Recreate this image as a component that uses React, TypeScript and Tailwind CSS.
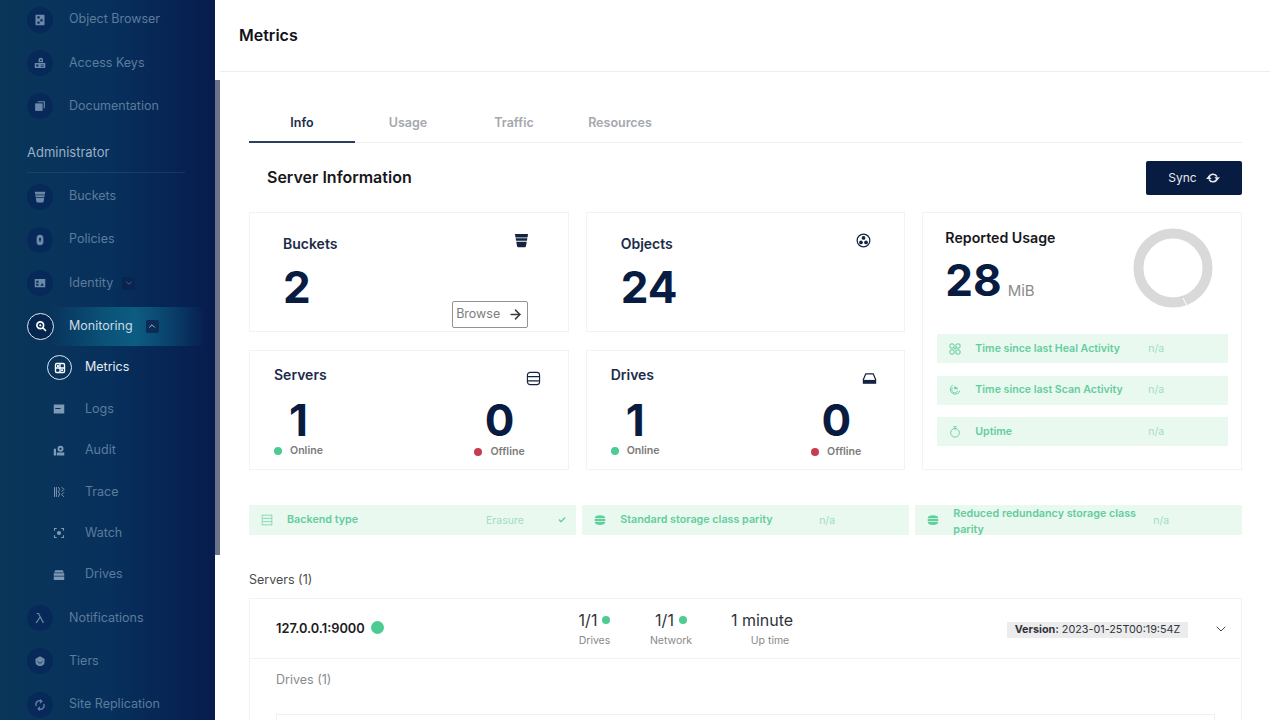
import React from "react";
import { ArrowRight, ChevronDown, ChevronUp, Check } from "lucide-react";

type IconProps = { className?: string };

const BucketIcon = ({ className }: IconProps) => (
  <svg viewBox="0 0 16 16" className={className} fill="currentColor">
    <path d="M1 1h14l-.6 3.800H1.600z" />
    <path d="M1.800 5.700h12.400l-.4 2.600H2.200z" />
    <path d="M2.400 9.200h11.200l-.9 5a1.200 1.200 0 0 1-1.200 1H4.500a1.200 1.200 0 0 1-1.200-1z" />
  </svg>
);
const BrowserIcon = ({ className }: IconProps) => (
  <svg viewBox="0 0 16 16" className={className} fill="currentColor">
    <path fillRule="evenodd" d="M3 1h10a1 1 0 0 1 1 1v12a1 1 0 0 1-1 1H3a1 1 0 0 1-1-1V2a1 1 0 0 1 1-1zm1.500 2v3h3V3zm4 4v3h3V7zm-4 3v3h3v-3z" />
  </svg>
);
const KeysIcon = ({ className }: IconProps) => (
  <svg viewBox="0 0 16 16" className={className} fill="currentColor">
    <path fillRule="evenodd" d="M9 1a3 3 0 0 1 3 3v3H6V4a3 3 0 0 1 3-3zm0 2a1.200 1.200 0 1 0 0 2.400A1.200 1.200 0 0 0 9 3z" />
    <path fillRule="evenodd" d="M1 8h14v6.500H1zm2 2v2.500h3V10zm6 0v1h4v-1zm0 2v1h4v-1z" />
  </svg>
);
const DocsIcon = ({ className }: IconProps) => (
  <svg viewBox="0 0 16 16" className={className} fill="currentColor">
    <path d="M5 1.500h9.500V11H13V3H5z" />
    <path d="M1.500 4.500H11.500V14.500H1.500z" />
  </svg>
);
const PolicyIcon = ({ className }: IconProps) => (
  <svg viewBox="0 0 16 16" className={className} fill="currentColor">
    <path fillRule="evenodd" d="M8 1c3 0 4.500 2 4.500 5v5c0 2.500-2 4-4.500 4s-4.500-1.500-4.500-4V6C3.500 3 5 1 8 1zm0 4a1.500 1.500 0 0 0-1 2.600V10h2V7.600A1.500 1.500 0 0 0 8 5z" />
  </svg>
);
const IdentityIcon = ({ className }: IconProps) => (
  <svg viewBox="0 0 16 16" className={className} fill="currentColor">
    <path fillRule="evenodd" d="M1 2.500h14v11H1zM3 5v2.500h3V5zm0 4v2.500h3V9zm5.500 2.500H13L11 8z" />
  </svg>
);
const MonitorIcon = ({ className }: IconProps) => (
  <svg viewBox="0 0 16 16" className={className} fill="none" stroke="currentColor" strokeWidth="2.200">
    <circle cx="7" cy="7" r="4.500" />
    <circle cx="7" cy="7" r="1" fill="currentColor" strokeWidth="1" />
    <path d="M10.500 10.500 14 14" strokeLinecap="round" />
  </svg>
);
const MetricsIcon = ({ className }: IconProps) => (
  <svg viewBox="0 0 16 16" className={className} fill="none" stroke="currentColor" strokeWidth="1.800">
    <rect x="2" y="2" width="12" height="12" rx="1.500" />
    <path d="M8 2v12M2 8h12" />
    <path d="M4 4h2.500v2.500H4zM9.500 9.500H12V12H9.500z" fill="currentColor" stroke="none" />
  </svg>
);
const LogsIcon = ({ className }: IconProps) => (
  <svg viewBox="0 0 16 16" className={className} fill="currentColor">
    <path fillRule="evenodd" d="M1 2h14v12H1zM3 6.500V8h7V6.500z" />
  </svg>
);
const AuditIcon = ({ className }: IconProps) => (
  <svg viewBox="0 0 16 16" className={className} fill="currentColor">
    <path fillRule="evenodd" d="M10 1a4 4 0 1 1 0 8 4 4 0 0 1 0-8zm0 2.500a1.500 1.500 0 1 0 0 3 1.500 1.500 0 0 0 0-3z" />
    <path d="M1 5h3v9H1zM5 10h10v4H5z" />
  </svg>
);
const TraceIcon = ({ className }: IconProps) => (
  <svg viewBox="0 0 16 16" className={className} fill="none" stroke="currentColor" strokeWidth="1.300">
    <path d="M2 1.500v13M4.500 1.500v13M11.500 1.500l3 3-3 3M14.500 8.500l-3 3 3 3M7 1.500l2 3-2 3 2 3-2 4" />
  </svg>
);
const WatchIcon = ({ className }: IconProps) => (
  <svg viewBox="0 0 16 16" className={className} fill="none" stroke="currentColor" strokeWidth="1.500">
    <path d="M5 2H2v3M11 2h3v3M5 14H2v-3M11 14h3v-3" />
    <circle cx="8" cy="8" r="2.800" fill="currentColor" stroke="none" />
  </svg>
);
const DrivesIcon = ({ className }: IconProps) => (
  <svg viewBox="0 0 16 16" className={className} fill="currentColor">
    <path d="M3 1.500h10l1.500 3H1.500zM1 5.500h14V9H1zM1 10h14v3.500a1 1 0 0 1-1 1H2a1 1 0 0 1-1-1z" />
  </svg>
);
const LambdaIcon = ({ className }: IconProps) => (
  <svg viewBox="0 0 16 16" className={className} fill="none" stroke="currentColor" strokeWidth="1.600">
    <path d="M3.500 2H6l6.500 12.500M8 7l-5 7.500" />
  </svg>
);
const TiersIcon = ({ className }: IconProps) => (
  <svg viewBox="0 0 16 16" className={className} fill="currentColor">
    <path d="M8 1.500 14 5v4.500c0 2.800-2.500 5-6 5s-6-2.200-6-5V5z" />
    <path d="M4.500 8.500l2 2h3l2-2" fill="none" stroke="#06264f" strokeWidth="1" />
  </svg>
);
const ReplicationIcon = ({ className }: IconProps) => (
  <svg viewBox="0 0 16 16" className={className} fill="none" stroke="currentColor" strokeWidth="1.500">
    <path d="M3 9.500A5 5 0 0 1 10 3M13 6.500A5 5 0 0 1 6 13" />
    <path d="M8 1l2.500 2L8 5.500M8 10.500 5.500 13 8 15" />
  </svg>
);
const ObjectsIcon = ({ className }: IconProps) => (
  <svg viewBox="0 0 16 16" className={className}>
    <circle cx="8" cy="8" r="6.800" fill="none" stroke="currentColor" strokeWidth="1.300" />
    <circle cx="8" cy="5.300" r="2" fill="currentColor" />
    <circle cx="5.300" cy="10" r="2" fill="currentColor" />
    <circle cx="10.700" cy="10" r="2" fill="currentColor" />
  </svg>
);
const ServerIcon = ({ className }: IconProps) => (
  <svg viewBox="0 0 16 16" className={className} fill="none" stroke="currentColor" strokeWidth="1.200">
    <rect x="1.500" y="1.500" width="13" height="13" rx="3" />
    <path d="M1.500 6h13M1.500 10.500h13" />
  </svg>
);
const DriveIcon = ({ className }: IconProps) => (
  <svg viewBox="0 0 16 16" className={className} fill="none" stroke="currentColor" strokeWidth="1.300">
    <path d="M4 3h8l2.500 6v4h-13V9z" />
    <path d="M1.500 9.500h13V13h-13z" fill="currentColor" stroke="none" />
  </svg>
);
const HealIcon = ({ className }: IconProps) => (
  <svg viewBox="0 0 16 16" className={className} fill="none" stroke="currentColor" strokeWidth="1.400">
    <circle cx="4" cy="4" r="2.900" />
    <circle cx="12" cy="4" r="2.900" />
    <circle cx="4" cy="12" r="2.900" />
    <circle cx="12" cy="12" r="2.900" />
    <path d="M6 6l4 4M10 6l-4 4" />
  </svg>
);
const ScanIcon = ({ className }: IconProps) => (
  <svg viewBox="0 0 16 16" className={className} fill="none" stroke="currentColor" strokeWidth="1.300">
    <path d="M5 1.500A6.500 6.500 0 1 0 14.500 9" />
    <path d="M5.500 4.500A4 4 0 1 0 11.500 9" />
    <path d="M7 7V3l2 .5A4 4 0 0 1 12 7z" fill="currentColor" stroke="none" />
  </svg>
);
const UptimeIcon = ({ className }: IconProps) => (
  <svg viewBox="0 0 16 16" className={className} fill="none" stroke="currentColor" strokeWidth="1.300">
    <circle cx="8" cy="9" r="5.800" />
    <path d="M8 .8v4.500M6 .8h4" />
  </svg>
);
const BackendIcon = ({ className }: IconProps) => (
  <svg viewBox="0 0 16 16" className={className} fill="none" stroke="currentColor" strokeWidth="1.100">
    <rect x="1.500" y="1.500" width="13" height="13" />
    <path d="M1.500 5.800h13M1.500 10.200h13" />
  </svg>
);
const StorageIcon = ({ className }: IconProps) => (
  <svg viewBox="0 0 16 16" className={className} fill="currentColor">
    <path d="M1 5.200C1 2.500 4 1.500 8 1.500s7 1 7 3.700zM1 6.300h14v3.400H1zM1 10.800h14c0 2.700-3 3.700-7 3.700s-7-1-7-3.700z" />
  </svg>
);
const SyncIcon = ({ className }: IconProps) => (
  <svg viewBox="0 0 16 16" className={className}>
    <path d="M3.200 7.500A5 5 0 0 1 12.500 6.500M12.800 8.500A5 5 0 0 1 3.500 9.500" fill="none" stroke="currentColor" strokeWidth="1.800" />
    <path d="M9.500 7h6.500l-3.200 3.500zM0 9h6.500L3.200 5.500z" fill="currentColor" />
  </svg>
);

const NavItem = ({ icon: Icon, label, chevron }: { icon: React.FC<IconProps>; label: string; chevron?: boolean }) => (
  <div className="flex h-[43.3px] items-center pl-[27px]">
    <div className="flex h-[26px] w-[26px] items-center justify-center rounded-full bg-[#07295a]">
      <Icon className="h-[12px] w-[12px] text-[#6d89a8]" />
    </div>
    <span className="ml-[16px] text-[12.5px] text-[#5c7c9c]">{label}</span>
    {chevron && (
      <span className="ml-[9px] flex h-[13px] w-[13px] items-center justify-center rounded-[2px] bg-[#08244f]">
        <ChevronDown className="h-[10px] w-[10px] text-[#4f7292]" />
      </span>
    )}
  </div>
);

const SubItem = ({ icon: Icon, label }: { icon: React.FC<IconProps>; label: string }) => (
  <div className="flex h-[41.4px] items-center pl-[53px]">
    <Icon className="h-[12px] w-[12px] text-[#7f9ab6]" />
    <span className="ml-[20px] text-[12.5px] text-[#5c7c9c]">{label}</span>
  </div>
);

const Sidebar = () => (
  <aside className="relative h-[720px] w-[220px] shrink-0 overflow-hidden bg-[linear-gradient(90deg,#0a3659_0%,#07305c_50%,#071f50_90%,#071b4c_100%)]">
    <div className="-mt-[2px] w-[215px]">
      <NavItem icon={BrowserIcon} label="Object Browser" />
      <NavItem icon={KeysIcon} label="Access Keys" />
      <NavItem icon={DocsIcon} label="Documentation" />
      <div className="mx-[27px] mb-[2px] h-[45px] w-[158px] border-b border-[#ffffff14] pt-[14px] text-[13px] leading-[20px] text-[#9ab0c5]">
        Administrator
      </div>
      <NavItem icon={BucketIcon} label="Buckets" />
      <NavItem icon={PolicyIcon} label="Policies" />
      <NavItem icon={IdentityIcon} label="Identity" chevron />
      <div className="flex h-[43.3px] items-center pl-[27px] pr-[10px]">
        <div className="z-10 flex h-[27px] w-[27px] shrink-0 items-center justify-center rounded-full border border-[#dfe8ef] bg-[#07264f]">
          <MonitorIcon className="h-[12px] w-[12px] text-white" />
        </div>
        <div className="-ml-[4px] flex h-[39px] flex-1 items-center bg-[linear-gradient(90deg,#07305c00_0%,#0b5278_35%,#0c5c82_55%,#07305c00_100%)] pl-[19px]">
          <span className="text-[12.5px] text-[#c9dbe6]">Monitoring</span>
          <span className="ml-[13px] flex h-[13px] w-[13px] items-center justify-center rounded-[2px] bg-[#0a2c57]">
            <ChevronUp className="h-[10px] w-[10px] text-[#c8d6e2]" />
          </span>
        </div>
      </div>
      <div className="-mt-[1px] mb-[1px]">
        <div className="flex h-[41.4px] items-center pl-[47px]">
          <div className="flex h-[25px] w-[25px] items-center justify-center rounded-full border border-[#dfe8ef]">
            <MetricsIcon className="h-[12px] w-[12px] text-white" />
          </div>
          <span className="ml-[13px] text-[12.5px] text-[#e4edf3]">Metrics</span>
        </div>
        <SubItem icon={LogsIcon} label="Logs" />
        <SubItem icon={AuditIcon} label="Audit" />
        <SubItem icon={TraceIcon} label="Trace" />
        <SubItem icon={WatchIcon} label="Watch" />
        <SubItem icon={DrivesIcon} label="Drives" />
      </div>
      <NavItem icon={LambdaIcon} label="Notifications" />
      <NavItem icon={TiersIcon} label="Tiers" />
      <NavItem icon={ReplicationIcon} label="Site Replication" />
    </div>
    {/* scrollbar */}
    <div className="absolute bottom-0 right-0 top-0 w-[5px] bg-white">
      <div className="mt-[80px] h-[475px] bg-[#6c7488]" />
    </div>
  </aside>
);

const Dot = ({ className }: IconProps) => <span className={`inline-block rounded-full ${className}`} />;

const Status = ({ value, label, dotColor, labelClass }: { value: number; label: string; dotColor: string; labelClass?: string }) => (
  <div className="flex flex-col items-center">
    <span className="text-[44px] font-bold leading-[44px] text-[#081c42]">{value}</span>
    <span className={`mt-[2px] flex items-center gap-[8px] text-[10.6px] font-semibold leading-[14px] text-[#7b7b7b] ${labelClass ?? ""}`}>
      <Dot className={`h-[8px] w-[8px] ${dotColor}`} />
      {label}
    </span>
  </div>
);

const CountCard = ({ title, icon: Icon }: { title: string; icon: React.FC<IconProps> }) => (
  <div className="flex h-[120px] flex-col border border-[#f3f3f3] pl-[24px] pr-[27px] pt-[14px]">
    <div className="flex items-start justify-between">
      <span className="text-[14px] font-semibold leading-[20px] text-[#1c2b4a]">{title}</span>
      <Icon className="mt-[6px] h-[15px] w-[15px] text-[#14233f]" />
    </div>
    <div className="mt-[12px] flex items-start justify-between pr-[16px]">
      <Status value={1} label="Online" dotColor="bg-[#4ccb92]" />
      <Status value={0} label="Offline" dotColor="bg-[#c83b51]" labelClass="translate-y-[1px]" />
    </div>
  </div>
);

const UsageRow = ({ icon: Icon, label }: { icon: React.FC<IconProps>; label: string }) => (
  <div className="flex h-[29px] items-center bg-[#eaf9f0] pl-[12px]">
    <Icon className="h-[12px] w-[12px] text-[#6fd0a4]" />
    <span className="ml-[14px] w-[173px] text-[10.6px] font-semibold text-[#63cd9d]">{label}</span>
    <span className="text-[10.5px] text-[#9fdcc0]">n/a</span>
  </div>
);

const StatsGrid = () => (
  <div className="mt-[17px] grid grid-cols-3 grid-rows-[120px_120px] gap-x-[17px] gap-y-[18px]">
    <div className="flex border border-[#f3f3f3] pl-[33px] pr-[40px] pt-[21px]">
      <div className="flex-1">
        <div className="text-[14px] font-semibold leading-[20px] text-[#1c2b4a]">Buckets</div>
        <div className="mt-[11px] text-[44px] font-bold leading-[44px] text-[#081c42]">2</div>
      </div>
      <div className="flex flex-col items-end justify-between pb-[3px]">
        <BucketIcon className="-mt-[1px] mr-[-1px] h-[15px] w-[15px] text-[#14233f]" />
        <div className="flex h-[27px] w-[76px] items-center justify-center gap-[8px] rounded-[2px] border border-[#939393] text-[12.5px] text-[#7d7d7d]">
          Browse
          <ArrowRight className="h-[15px] w-[15px] text-[#3c3c3c]" strokeWidth={2.5} />
        </div>
      </div>
    </div>
    <div className="flex justify-between border border-[#f3f3f3] pl-[34px] pr-[33px] pt-[21px]">
      <div>
        <div className="text-[14px] font-semibold leading-[20px] text-[#1c2b4a]">Objects</div>
        <div className="mt-[11px] text-[44px] font-bold leading-[44px] text-[#081c42]">24</div>
      </div>
      <ObjectsIcon className="-mt-[1px] h-[15px] w-[15px] text-[#14233f]" />
    </div>
    <div className="row-span-2 border border-[#f3f3f3] pl-[14px] pr-[13px]">
      <div className="flex justify-between pr-[15px] pt-[15px]">
        <div className="pl-[8px]">
          <div className="text-[14.2px] font-semibold leading-[20px] text-[#17171c]">Reported Usage</div>
          <div className="mt-[10px] flex items-end">
            <span className="text-[44px] font-bold leading-[44px] text-[#081c42]">28</span>
            <span className="mb-[1px] ml-[6px] text-[15px] leading-[20px] text-[#8b8b8b]">MiB</span>
          </div>
        </div>
        <svg viewBox="0 0 80 80" className="h-[80px] w-[80px]">
          <circle cx="40" cy="40" r="34.5" fill="none" stroke="#d9d9d9" strokeWidth="10" />
          <path d="M50 70 L54 78" stroke="#ffffff" strokeWidth="1" />
        </svg>
      </div>
      <div className="mt-[26px] flex flex-col gap-[12.5px]">
        <UsageRow icon={HealIcon} label="Time since last Heal Activity" />
        <UsageRow icon={ScanIcon} label="Time since last Scan Activity" />
        <UsageRow icon={UptimeIcon} label="Uptime" />
      </div>
    </div>
    <CountCard title="Servers" icon={ServerIcon} />
    <CountCard title="Drives" icon={DriveIcon} />
  </div>
);

const InfoStrip = () => (
  <div className="mt-[35px] grid h-[30px] grid-cols-3 gap-x-[6.5px]">
    <div className="flex items-center bg-[#eaf9f0] pl-[12px] pr-[10px]">
      <BackendIcon className="h-[12px] w-[12px] text-[#78d3a9]" />
      <span className="ml-[14px] mt-[1px] w-[199px] text-[10.75px] font-semibold text-[#63cd9d]">Backend type</span>
      <span className="mt-[1px] text-[10.5px] text-[#9fdcc0]">Erasure</span>
      <Check className="ml-auto h-[8px] w-[8px] text-[#63cd9d]" strokeWidth={4} />
    </div>
    <div className="flex items-center bg-[#eaf9f0] pl-[12px]">
      <StorageIcon className="h-[12px] w-[12px] text-[#5fcf9c]" />
      <span className="ml-[14px] mt-[1px] w-[199px] text-[10.75px] font-semibold text-[#63cd9d]">Standard storage class parity</span>
      <span className="mt-[1px] text-[10.5px] text-[#9fdcc0]">n/a</span>
    </div>
    <div className="flex items-center overflow-hidden bg-[#eaf9f0] pl-[12px]">
      <StorageIcon className="h-[12px] w-[12px] text-[#5fcf9c]" />
      <span className="ml-[14px] mt-[4px] w-[200px] text-[10.75px] font-semibold leading-[16px] text-[#63cd9d]">
        Reduced redundancy storage class parity
      </span>
      <span className="mt-[2px] text-[10.5px] text-[#9fdcc0]">n/a</span>
    </div>
  </div>
);

const ServerMetric = ({ value, label, width, dot, labelClass }: { value: string; label: string; width: string; dot?: boolean; labelClass?: string }) => (
  <div className={`flex flex-col items-center ${width}`}>
    <span className="-mt-[1px] flex items-center gap-[5px] text-[16px] leading-[22px] text-[#30343c]">
      {value}
      {dot && <Dot className="h-[8px] w-[8px] bg-[#4ccb92]" />}
    </span>
    <span className={`mt-[3px] text-[10.5px] leading-[14px] text-[#8a8a8a] ${labelClass ?? ""}`}>{label}</span>
  </div>
);

const ServerCard = () => (
  <div className="mt-[9px] h-[200px] border border-[#f3f3f3]">
    <div className="flex h-[60px] items-center border-b border-[#f3f3f3] pl-[26px] pr-[12px]">
      <div className="flex w-[299px] items-center gap-[6px]">
        <span className="text-[12.8px] font-semibold text-[#1c1c22]">127.0.0.1:9000</span>
        <Dot className="mb-[2px] h-[13px] w-[13px] bg-[#4ccb92]" />
      </div>
      <ServerMetric value="1/1" label="Drives" width="w-[39px]" dot />
      <ServerMetric value="1/1" label="Network" width="w-[40px] ml-[37px]" dot />
      <ServerMetric value="1 minute" label="Up time" width="w-[64px] ml-[39px]" labelClass="translate-x-[8px]" />
      <span className="ml-auto mt-[3px] flex h-[16px] w-[181px] items-center justify-center bg-[#ececec] text-[10.8px] text-[#30343c]">
        <b className="mr-[3px] font-bold">Version:</b> 2023-01-25T00:19:54Z
      </span>
      <ChevronDown className="ml-[25px] h-[16px] w-[16px] text-[#4a4a4a]" strokeWidth={1.5} />
    </div>
    <div className="pl-[26px] pr-[26px] pt-[13px]">
      <div className="text-[12.5px] leading-[16px] text-[#8a8a8a]">Drives (1)</div>
      <div className="mt-[26px] h-[60px] border border-[#f0f0f0]" />
    </div>
  </div>
);

export default function App() {
  return (
    <div className="flex h-[720px] w-[1270px] overflow-hidden bg-white font-['Inter',sans-serif]">
      <Sidebar />
      <main className="flex-1">
        <header className="flex h-[72px] items-center border-b border-[#eeeeee] pb-[2px] pl-[19px]">
          <h1 className="text-[16px] font-semibold text-[#111118]">Metrics</h1>
        </header>
        <div className="pl-[29px] pr-[28px]">
          <div className="mt-[28px] flex h-[43px] border-b border-[#eeeeee] text-[12.5px] font-semibold">
            <div className="-mb-px flex h-[43px] w-[106px] items-center justify-center border-b-2 border-[#2c3f5c] pt-[5px] text-[#1c2b4a]">Info</div>
            <div className="flex w-[106px] items-center justify-center pt-[4px] text-[#a5a8ad]">Usage</div>
            <div className="flex w-[106px] items-center justify-center pt-[4px] text-[#a5a8ad]">Traffic</div>
            <div className="flex w-[106px] items-center justify-center pt-[4px] text-[#a5a8ad]">Resources</div>
          </div>
          <div className="mt-[18px] flex h-[34px] items-center justify-between pl-[18px]">
            <h2 className="-mt-[2px] text-[16px] font-semibold text-[#17171c]">Server Information</h2>
            <button className="flex h-[34px] w-[96px] items-center justify-center gap-[9px] rounded-[2px] bg-[#081c42] text-[12px] text-[#e5e8ee]">
              Sync
              <SyncIcon className="h-[14px] w-[14px]" />
            </button>
          </div>
          <StatsGrid />
          <InfoStrip />
          <div className="mt-[36px] text-[12.5px] leading-[18px] text-[#4a4a4a]">Servers (1)</div>
          <ServerCard />
        </div>
      </main>
    </div>
  );
}
